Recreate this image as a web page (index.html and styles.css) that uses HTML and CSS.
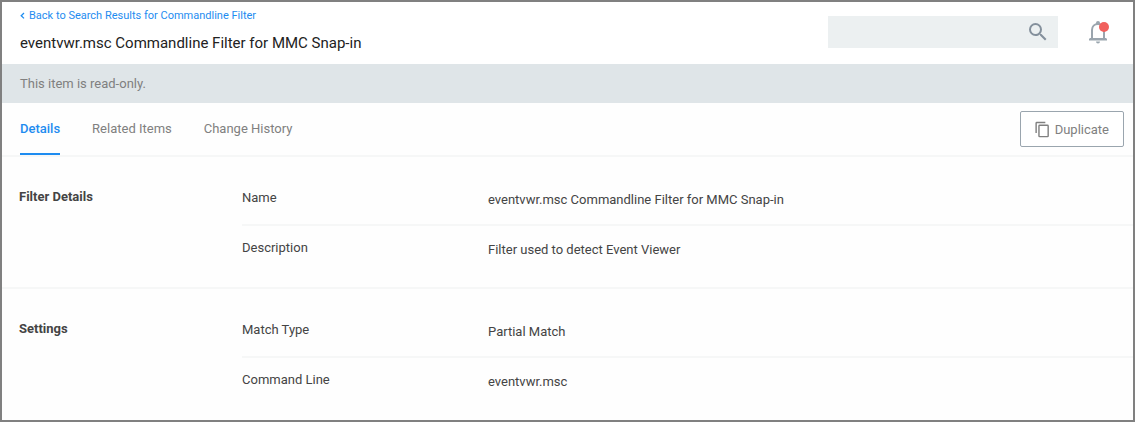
FILE: index.html
```html
<!DOCTYPE html>
<html lang="en">
<head>
  <meta charset="UTF-8" />
  <meta name="viewport" content="width=device-width, initial-scale=1.0"/>
  <title>eventvwr.msc Commandline Filter for MMC Snap-in</title>
  <link rel="stylesheet" href="styles.css">
</head>
<body>

  <header class="page-header">
    <div class="heading">
      <a class="back-link" href="#">
        <svg width="5" height="8" viewBox="0 0 5 8"><path d="M4 1 1.200 3.700 4 6.400" fill="none" stroke="currentColor" stroke-width="1.300"/></svg>
        Back to Search Results for Commandline Filter
      </a>
      <h1>eventvwr.msc Commandline Filter for MMC Snap-in</h1>
    </div>

    <form class="search">
      <input type="search" aria-label="Search" />
      <button type="submit" aria-label="Search">
        <svg width="24" height="24" viewBox="0 0 24 24"><path fill="currentColor" d="M15.5 14h-.79l-.28-.27A6.47 6.47 0 0 0 16 9.5 6.5 6.5 0 1 0 9.5 16c1.61 0 3.09-.59 4.23-1.57l.27.28v.79l5 4.99L20.49 19l-4.99-5zm-6 0a4.5 4.5 0 1 1 0-9 4.5 4.5 0 0 1 0 9z"/></svg>
      </button>
    </form>

    <button class="bell" type="button" aria-label="Notifications">
      <svg width="26" height="26" viewBox="0 0 26 26">
        <path d="M7 18.500V10c0-3.500 2.500-6 6-6s6 2.500 6 6v8.500" fill="none" stroke="#9aa5ae" stroke-width="2"/>
        <path fill="#9aa5ae" d="M11 4V3a2 2 0 0 1 4 0v1zM5 18h16l1 1v1.500H4V19zM11 21.500h4a2 2 0 0 1-4 0z"/>
        <circle cx="19" cy="7" r="5" fill="#f1605d"/>
      </svg>
    </button>
  </header>

  <div class="banner">This item is read-only.</div>

  <div class="toolbar">
    <nav class="tabs">
      <a class="active" href="#">Details</a>
      <a href="#">Related Items</a>
      <a href="#">Change History</a>
    </nav>
    <button class="duplicate" type="button">
      <svg width="17" height="17" viewBox="0 0 24 24"><path fill="currentColor" d="M16 1H4a2 2 0 0 0-2 2v14h2V3h12V1zm3 4H8a2 2 0 0 0-2 2v14a2 2 0 0 0 2 2h11a2 2 0 0 0 2-2V7a2 2 0 0 0-2-2zm0 16H8V7h11v14z"/></svg>
      Duplicate
    </button>
  </div>

  <main>
    <section class="group">
      <h2>Filter Details</h2>
      <dl>
        <div class="row">
          <dt>Name</dt>
          <dd>eventvwr.msc Commandline Filter for MMC Snap-in</dd>
        </div>
        <div class="row">
          <dt>Description</dt>
          <dd>Filter used to detect Event Viewer</dd>
        </div>
      </dl>
    </section>

    <section class="group">
      <h2>Settings</h2>
      <dl>
        <div class="row">
          <dt>Match Type</dt>
          <dd>Partial Match</dd>
        </div>
        <div class="row">
          <dt>Command Line</dt>
          <dd>eventvwr.msc</dd>
        </div>
      </dl>
    </section>
  </main>

</body>
</html>
```
FILE: styles.css
```css
* {
  box-sizing: border-box;
}

body {
  margin: 0;
  min-height: 100vh;
  border: 2px solid #808080;
  background-color: #fefefe;
  color: #444;
  font-family: Roboto, sans-serif;
  font-size: 13px;
  line-height: 20px;
}

a {
  text-decoration: none;
}

button {
  font: inherit;
  cursor: pointer;
}

svg {
  display: block;
}

.page-header {
  display: flex;
  align-items: center;
  height: 62px;
  padding: 0 22px 0 18px;
  background-color: #fff;
}

.heading {
  flex: 1;
}

.back-link {
  display: flex;
  align-items: center;
  gap: 4px;
  color: #1e8cf0;
  font-size: 11px;
  line-height: 16px;
}

h1 {
  margin: 9px 0 5px;
  color: #222;
  font-size: 15px;
  font-weight: normal;
  line-height: 20px;
}

.search {
  display: flex;
  align-items: center;
  width: 230px;
  height: 32px;
  margin-top: -2px;
  padding-right: 8px;
  background-color: #ecf0f1;
}

.search input {
  flex: 1;
  min-width: 0;
  height: 32px;
  padding: 0 8px;
  border: none;
  outline: none;
  background: none;
  font: inherit;
}

.search button,
.bell {
  padding: 0;
  border: none;
  background: none;
  color: #84909c;
}

.bell {
  margin-left: 27px;
}

.banner {
  padding: 10px 18px 9px;
  background-color: #dfe5e8;
  color: #808080;
}

.toolbar {
  display: flex;
  align-items: center;
  justify-content: space-between;
  padding-right: 9px;
  border-bottom: 2px solid #f6f7f7;
}

.tabs {
  display: flex;
  gap: 32px;
  padding-left: 18px;
}

.tabs a {
  padding: 16px 0 14px;
  border-bottom: 2px solid transparent;
  color: #808080;
}

.tabs a.active {
  border-bottom-color: #1e8cf0;
  color: #1e8cf0;
  font-weight: 500;
}

.duplicate {
  display: flex;
  align-items: center;
  gap: 4px;
  height: 36px;
  padding: 1px 14px 0 13px;
  border: 1px solid #9aa5ae;
  border-radius: 2px;
  background-color: #fff;
  color: #808080;
}

.group {
  display: flex;
  padding: 19px 0 11px 17px;
}

.group + .group {
  border-top: 2px solid #f6f7f7;
}

h2 {
  width: 223px;
  margin: 0;
  padding-top: 11px;
  font-size: 13px;
  font-weight: bold;
  line-height: 20px;
}

dl {
  flex: 1;
  margin: 0;
}

.row {
  display: flex;
  height: 50px;
  padding-top: 12px;
}

.row:not(:last-child) {
  border-bottom: 2px solid #f6f7f7;
}

dt {
  width: 246px;
}

dd {
  flex: 1;
  margin: 0;
  padding-top: 2px;
}
```
